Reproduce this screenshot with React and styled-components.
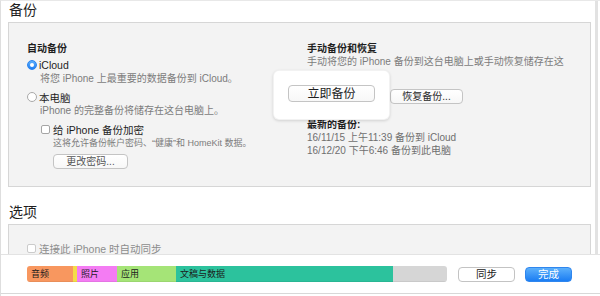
import React from 'react';
import styled, { createGlobalStyle } from 'styled-components';

const GlobalStyle = createGlobalStyle`
  html, body {
    margin: 0;
    padding: 0;
    background: #fff;
  }
  body {
    font-family: "Liberation Sans", "Noto Sans CJK SC", sans-serif;
    color: #222;
  }
`;

const Window = styled.div`
  width: 600px;
  height: 296px;
  box-sizing: border-box;
  border-left: 1px solid #dedede;
  border-top: 1px solid #e8e8e8;
  overflow: hidden;
  display: flex;
  flex-direction: column;
  background: #fff;
`;

const Body = styled.div`
  display: flex;
  height: 253px;
  flex: none;
  overflow: hidden;
`;

const Scroll = styled.div`
  flex: 1;
  overflow: hidden;
`;

const Track = styled.div`
  width: 3px;
  margin-right: 2px;
  background: #e2e2e2;
`;

const Heading = styled.h2`
  margin: ${(p) => p.$top || 0}px 0 0;
  padding: 0 0 2px 8px;
  font-size: 14px;
  line-height: 19px;
  font-weight: normal;
  color: #1f1f1f;
`;

const Panel = styled.section`
  position: relative;
  box-sizing: border-box;
  margin-left: 7px;
  width: 583px;
  height: ${(p) => p.$height}px;
  border: 1px solid #d6d6d6;
  background: #f3f3f3;
  padding: ${(p) => p.$pad}px 18px 0;
`;

const Columns = styled.div`
  display: grid;
  grid-template-columns: 280px 1fr;
`;

const Column = styled.div`
  display: flex;
  flex-direction: column;
  align-items: flex-start;
`;

const GroupTitle = styled.div`
  font-size: 10px;
  font-weight: bold;
  line-height: ${(p) => p.$lh || 14}px;
  margin-top: ${(p) => p.$top || 0}px;
  margin-bottom: ${(p) => p.$bottom || 0}px;
  color: #1e1e1e;
`;

const OptionRow = styled.label`
  display: flex;
  align-items: center;
  height: 16px;
  margin-left: ${(p) => p.$indent || 0}px;
  margin-top: ${(p) => p.$top || 0}px;
  font-size: 10.5px;
  color: ${(p) => (p.$disabled ? '#8c8c8c' : '#1e1e1e')};
`;

const Radio = styled.span`
  box-sizing: border-box;
  width: 10px;
  height: 10px;
  border-radius: 50%;
  margin-right: 2px;
  flex: none;
  display: flex;
  align-items: center;
  justify-content: center;
  border: 1px solid ${(p) => (p.$on ? '#2a84f0' : '#a9a9a9')};
  background: ${(p) => (p.$on ? 'linear-gradient(#5fb0fb, #1f7ef2)' : '#fff')};

  &::after {
    content: '';
    width: 4px;
    height: 4px;
    border-radius: 50%;
    background: #fff;
    display: ${(p) => (p.$on ? 'block' : 'none')};
  }
`;

const Check = styled.span`
  box-sizing: border-box;
  width: 9px;
  height: 9px;
  border-radius: 2px;
  margin-right: 3px;
  flex: none;
  border: 1px solid ${(p) => (p.$disabled ? '#cbcbcb' : '#a5a5a5')};
  background: #fff;
`;

const Desc = styled.div`
  font-size: ${(p) => p.$size || 10}px;
  line-height: ${(p) => p.$lh || 12}px;
  color: ${(p) => p.$color || '#7c7c7c'};
  margin-left: ${(p) => p.$indent || 0}px;
  margin-bottom: ${(p) => p.$bottom || 0}px;
  white-space: nowrap;
`;

const Button = styled.button`
  box-sizing: border-box;
  height: ${(p) => p.$h || 15}px;
  width: ${(p) => p.$w}px;
  margin: ${(p) => p.$top || 0}px 0 0 ${(p) => p.$indent || 0}px;
  padding: 0;
  border: 1px solid #c4c4c4;
  border-radius: 4px;
  background: linear-gradient(#ffffff, #f7f7f7);
  font-family: inherit;
  font-size: ${(p) => p.$size || 10}px;
  line-height: 1;
  color: ${(p) => p.$color || '#2a2a2a'};
  flex: none;
`;

const Popover = styled.div`
  position: absolute;
  left: 264px;
  top: 47px;
  box-sizing: border-box;
  width: 117px;
  height: 50px;
  padding-top: 14px;
  display: flex;
  justify-content: center;
  align-items: flex-start;
  background: #fff;
  border-radius: 6px;
  border: 1px solid rgba(0, 0, 0, 0.05);
  box-shadow: 0 1px 3px rgba(0, 0, 0, 0.14);
`;

const Footer = styled.footer`
  box-sizing: border-box;
  height: 40px;
  flex: none;
  border-top: 1px solid #e3e3e3;
  border-bottom: 1px solid #d8d8d8;
  display: flex;
  align-items: center;
  padding-left: 26px;
`;

const StorageBar = styled.div`
  display: flex;
  height: 16px;
  width: 420px;
  border-radius: 3px;
  overflow: hidden;
  margin-right: 11px;
`;

const Segment = styled.div`
  box-sizing: border-box;
  flex: none;
  height: 100%;
  padding-left: 4px;
  background: ${(p) => p.$color};
  box-shadow: inset 0 -1px 0 rgba(0, 0, 0, 0.06);
  font-size: 9px;
  line-height: 16px;
  color: #1c1c1c;
  white-space: nowrap;
  overflow: hidden;
`;

const FooterButton = styled.button`
  box-sizing: border-box;
  height: 15px;
  width: ${(p) => p.$w}px;
  margin-right: 10px;
  padding: 0;
  border-radius: 4px;
  font-family: inherit;
  font-size: 10.5px;
  line-height: 1;
  border: 1px solid ${(p) => (p.$primary ? '#2f86ee' : '#c3c3c3')};
  background: ${(p) => (p.$primary ? 'linear-gradient(#5cb0fb, #1b7df3)' : '#fff')};
  color: ${(p) => (p.$primary ? '#fff' : '#222')};
`;

const segments = [
  { label: '音频', color: '#f8975f', width: 46 },
  { label: '', color: '#f4dc48', width: 3 },
  { label: '照片', color: '#f47cf3', width: 40 },
  { label: '应用', color: '#a5e477', width: 59 },
  { label: '文稿与数据', color: '#2cc29d', width: 217 },
  { label: '', color: '#d6d6d6', width: 55 },
];

export default function App() {
  return (
    <>
      <GlobalStyle />
      <Window>
        <Body>
          <Scroll>
            <Heading>备份</Heading>
            <Panel $height={165} $pad={19}>
              <Columns>
                <Column>
                  <GroupTitle $bottom={1}>自动备份</GroupTitle>
                  <OptionRow>
                    <Radio $on />
                    iCloud
                  </OptionRow>
                  <Desc $indent={13} $bottom={4}>将您 iPhone 上最重要的数据备份到 iCloud。</Desc>
                  <OptionRow>
                    <Radio />
                    本电脑
                  </OptionRow>
                  <Desc $indent={13}>iPhone 的完整备份将储存在这台电脑上。</Desc>
                  <OptionRow $indent={14} $top={4}>
                    <Check />
                    给 iPhone 备份加密
                  </OptionRow>
                  <Desc $indent={26} $size={9}>这将允许备份帐户密码、“健康”和 HomeKit 数据。</Desc>
                  <Button $w={75} $indent={26} $top={5} $color="#555">更改密码...</Button>
                </Column>
                <Column>
                  <GroupTitle>手动备份和恢复</GroupTitle>
                  <Desc>手动将您的 iPhone 备份到这台电脑上或手动恢复储存在这</Desc>
                  <Button $w={73} $indent={83} $top={21}>恢复备份...</Button>
                  <GroupTitle $lh={12} $top={15}>最新的备份:</GroupTitle>
                  <Desc $lh={13} $color="#6f6f6f">16/11/15 上午11:39 备份到 iCloud</Desc>
                  <Desc $lh={13} $color="#6f6f6f">16/12/20 下午6:46 备份到此电脑</Desc>
                </Column>
              </Columns>
              <Popover>
                <Button $w={87} $h={17} $size={12} $color="#1e1e1e">立即备份</Button>
              </Popover>
            </Panel>
            <Heading $top={16}>选项</Heading>
            <Panel $height={70} $pad={15}>
              <OptionRow $disabled>
                <Check $disabled />
                连接此 iPhone 时自动同步
              </OptionRow>
            </Panel>
          </Scroll>
          <Track />
        </Body>
        <Footer>
          <StorageBar>
            {segments.map((s, i) => (
              <Segment key={i} $color={s.color} style={{ width: s.width }}>
                {s.label}
              </Segment>
            ))}
          </StorageBar>
          <FooterButton $w={57}>同步</FooterButton>
          <FooterButton $w={47} $primary>完成</FooterButton>
        </Footer>
      </Window>
    </>
  );
}
